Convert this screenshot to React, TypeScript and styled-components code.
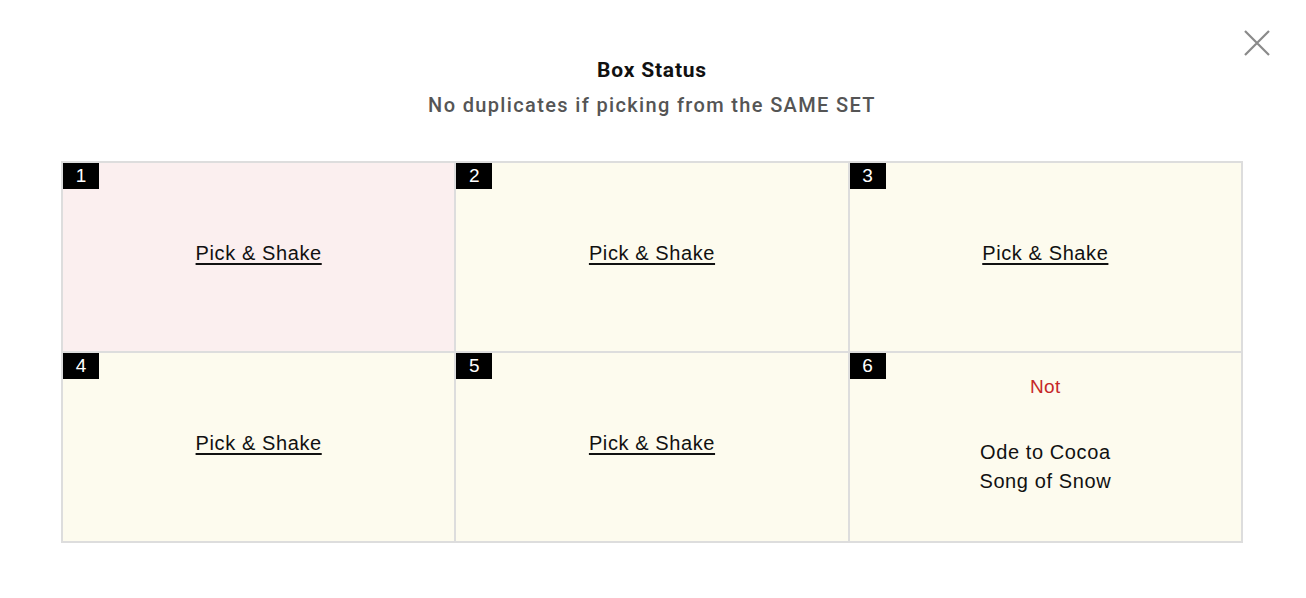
import React from "react";
import styled, { createGlobalStyle } from "styled-components";

const Global = createGlobalStyle`
  html, body { margin: 0; padding: 0; background: #fff; }
  body { font-family: "Liberation Sans", Arial, sans-serif; }
`;

const Page = styled.div`
  position: relative;
  width: 1306px;
  height: 598px;
  box-sizing: border-box;
  padding: 56px 0 0 61px;
`;

const Close = styled.button`
  position: absolute;
  top: 29px;
  right: 35px;
  width: 28px;
  height: 28px;
  padding: 0;
  border: none;
  background: transparent;
  cursor: pointer;
`;

const Header = styled.div`
  width: 1182px;
  display: flex;
  flex-direction: column;
  align-items: center;
  margin-bottom: 42px;
  font-family: Roboto, "Liberation Sans", sans-serif;
`;

const Title = styled.h2`
  margin: 0;
  font-size: 21px;
  font-weight: 700;
  line-height: 28px;
  color: #111;
  letter-spacing: 0.8px;
`;

const Subtitle = styled.p`
  margin: 7px 0 0;
  font-size: 20px;
  font-weight: 500;
  line-height: 28px;
  color: #555;
  letter-spacing: 1.35px;
`;

const Grid = styled.div`
  width: 1182px;
  box-sizing: border-box;
  border: 1px solid #dddddd;
  display: grid;
  grid-template-columns: repeat(3, 1fr);
  grid-template-rows: repeat(2, 190px);
`;

const Cell = styled.div<{ $tone: "pink" | "cream" }>`
  position: relative;
  box-sizing: border-box;
  border: 1px solid #dddddd;
  padding-bottom: 7px;
  background: ${(p) => (p.$tone === "pink" ? "#fbefef" : "#fdfbee")};
  display: flex;
  flex-direction: column;
  align-items: center;
  justify-content: center;
`;

const Badge = styled.span`
  position: absolute;
  top: 0;
  left: 0;
  width: 36px;
  height: 26px;
  background: #000;
  color: #fff;
  font-size: 19px;
  line-height: 26px;
  text-align: center;
`;

const PickLink = styled.a`
  font-size: 20px;
  color: #111;
  text-decoration: underline;
  text-decoration-thickness: 1.5px;
  text-underline-offset: 3px;
  letter-spacing: 0.6px;
  cursor: pointer;
`;

const Status = styled.div`
  align-self: stretch;
  flex: 1;
  display: flex;
  flex-direction: column;
  align-items: center;
  padding-top: 21px;
`;

const NotLabel = styled.div`
  font-size: 19px;
  color: #c62828;
  line-height: 26px;
  margin-bottom: 38px;
  letter-spacing: 0.3px;
`;

const ItemLine = styled.div`
  font-size: 20px;
  color: #111;
  line-height: 29px;
  letter-spacing: 0.6px;
`;

export default function App() {
  const cells = [1, 2, 3, 4, 5];
  return (
    <>
      <Global />
      <Page>
        <Close aria-label="close">
          <svg width="28" height="28" viewBox="0 0 28 28">
            <path d="M2 2 L26 26 M26 2 L2 26" stroke="#8a8a8a" strokeWidth="2.2" fill="none" />
          </svg>
        </Close>
        <Header>
          <Title>Box Status</Title>
          <Subtitle>No duplicates if picking from the SAME SET</Subtitle>
        </Header>
        <Grid>
          {cells.map((n) => (
            <Cell key={n} $tone={n === 1 ? "pink" : "cream"}>
              <Badge>{n}</Badge>
              <PickLink>Pick &amp; Shake</PickLink>
            </Cell>
          ))}
          <Cell $tone="cream">
            <Badge>6</Badge>
            <Status>
              <NotLabel>Not</NotLabel>
              <ItemLine>Ode to Cocoa</ItemLine>
              <ItemLine>Song of Snow</ItemLine>
            </Status>
          </Cell>
        </Grid>
      </Page>
    </>
  );
}
